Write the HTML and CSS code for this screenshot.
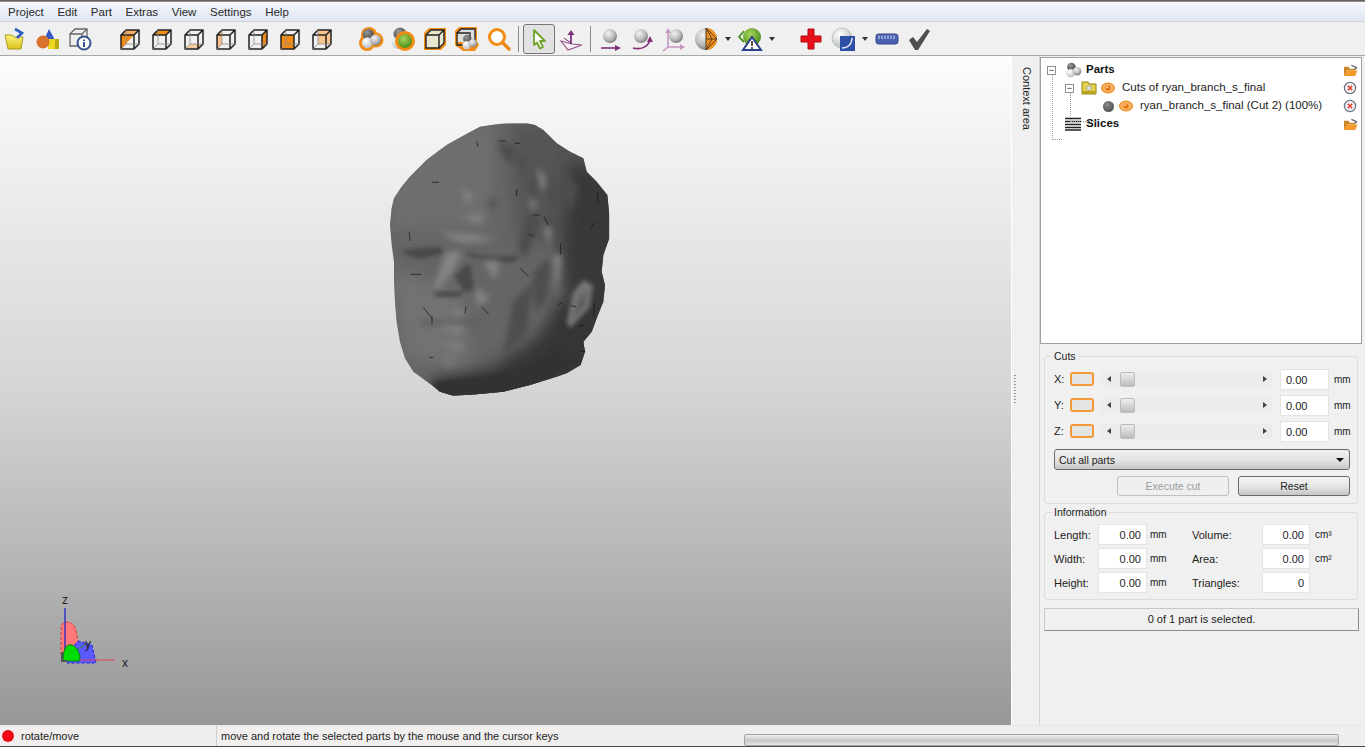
FILE: index.html
```html
<!DOCTYPE html>
<html lang="en">
<head>
<meta charset="utf-8">
<title>Project</title>
<link rel="stylesheet" href="styles.css">
</head>
<body>
<svg class="defs" width="0" height="0" aria-hidden="true">
  <defs>
    <radialGradient id="gGrey" cx="38%" cy="32%" r="70%"><stop offset="0" stop-color="#f2f2f2"/><stop offset=".6" stop-color="#bdbdbd"/><stop offset="1" stop-color="#7d7d7d"/></radialGradient>
    <radialGradient id="gDark" cx="38%" cy="32%" r="70%"><stop offset="0" stop-color="#9a9a9a"/><stop offset="1" stop-color="#404040"/></radialGradient>
    <radialGradient id="gLight" cx="38%" cy="32%" r="70%"><stop offset="0" stop-color="#fff"/><stop offset="1" stop-color="#b9bec0"/></radialGradient>
    <radialGradient id="gGreen" cx="40%" cy="35%" r="65%"><stop offset="0" stop-color="#a9d65d"/><stop offset="1" stop-color="#4e8f1c"/></radialGradient>
    <linearGradient id="gFolder" x1="0" y1="0" x2="0" y2="1"><stop offset="0" stop-color="#fff27a"/><stop offset="1" stop-color="#d9c21a"/></linearGradient>
    <symbol id="cubeFrame" viewBox="0 0 24 24">
      <path d="M3 8 8 3H21V17L16 22H3Z M3 8H16V22 M16 8 21 3" fill="none" stroke="#222" stroke-width="1.5" stroke-linejoin="round"/>
      <path d="M8 3V17H21 M8 17 3 22" fill="none" stroke="#8a8a8a" stroke-width=".8"/>
    </symbol>
    <symbol id="molecules" viewBox="0 0 24 24">
      <circle cx="9" cy="7" r="6" fill="url(#gDark)"/><circle cx="8" cy="16" r="6" fill="url(#gLight)"/><circle cx="17" cy="13" r="6" fill="url(#gGrey)"/>
    </symbol>
    <symbol id="openFolder" viewBox="0 0 16 14">
      <path d="M1 3H6L7 5H13V7H4L1 13Z" fill="#c8852a"/><path d="M3.5 7H15.5L13 13H1Z" fill="#f49a2a"/><path d="M9 1.5 14.5 4 12.5 6" fill="none" stroke="#666" stroke-width="1.4"/>
    </symbol>
    <symbol id="eye" viewBox="0 0 14 12">
      <ellipse cx="7" cy="6" rx="6.4" ry="4.8" fill="#f6b26b" stroke="#ee8a18" stroke-width="1.2"/><circle cx="7" cy="6" r="2.6" fill="#e9780c"/><circle cx="6.2" cy="5.2" r=".9" fill="#ffe3c2"/>
    </symbol>
    <symbol id="remove" viewBox="0 0 14 14">
      <circle cx="7" cy="7" r="5.6" fill="#f4f4f6" stroke="#6f7688" stroke-width="1.3"/><path d="M4.8 4.8 9.2 9.2M9.2 4.8 4.8 9.2" stroke="#e2402a" stroke-width="1.6"/>
    </symbol>
  </defs>
</svg>

<div class="app">
  <div class="titleline"></div>
  <nav class="menubar">
    <span>Project</span><span>Edit</span><span>Part</span><span>Extras</span><span>View</span><span>Settings</span><span>Help</span>
  </nav>

  <div class="toolbar">
    <div class="tgroup">
      <span class="tool"><svg viewBox="0 0 24 24"><path d="M1 8H8L10 10H19L17 22 4 22Z" fill="url(#gFolder)" stroke="#a89a20"/><path d="M11 2 18 6 13 11" fill="none" stroke="#2a5fc0" stroke-width="2.6"/></svg></span>
      <span class="tool"><svg viewBox="0 0 24 24"><path d="M13 2 19 13H8Z" fill="#3557c6"/><rect x="12" y="12" width="11" height="10" fill="#ecd81f"/><path d="M19 12h4v10h-4z" fill="#b9a80f"/><circle cx="7" cy="15" r="6.500" fill="#d8722c"/></svg></span>
      <span class="tool"><svg viewBox="0 0 24 24"><path d="M2 7 7 2H19V15L14 19H2Z M2 7H14V19 M14 7 19 2" fill="none" stroke="#666" stroke-width="1.300"/><circle cx="16" cy="16" r="6.500" fill="#fff" stroke="#3a5290" stroke-width="2"/><path d="M16 12.500v1.500M16 15v5" stroke="#3a5290" stroke-width="2"/></svg></span>
    </div>
    <div class="tgroup tgroup-cubes">
      <span class="tool"><svg viewBox="0 0 24 24"><path d="M3 8H16L3 22Z" fill="#f28c14"/><path d="M3 8 8 3H21L16 8Z" fill="#f5ad67"/><use href="#cubeFrame"/></svg></span>
      <span class="tool"><svg viewBox="0 0 24 24"><path d="M3 8 8 3H21L16 8Z" fill="#f28c14"/><use href="#cubeFrame"/></svg></span>
      <span class="tool"><svg viewBox="0 0 24 24"><path d="M3 22 8 17H21L16 22Z" fill="#f5c9a0"/><use href="#cubeFrame"/></svg></span>
      <span class="tool"><svg viewBox="0 0 24 24"><path d="M3 8 8 3V17L3 22Z" fill="#f5c08a"/><use href="#cubeFrame"/></svg></span>
      <span class="tool"><svg viewBox="0 0 24 24"><path d="M16 8 21 3V17L16 22Z" fill="#e88a1c"/><use href="#cubeFrame"/></svg></span>
      <span class="tool"><svg viewBox="0 0 24 24"><rect x="3" y="8" width="13" height="14" fill="#f28c14"/><use href="#cubeFrame"/></svg></span>
      <span class="tool"><svg viewBox="0 0 24 24"><rect x="8" y="3" width="13" height="14" fill="#f8c58e"/><use href="#cubeFrame"/></svg></span>
    </div>
    <div class="tgroup tgroup-select">
      <span class="tool"><svg viewBox="0 0 24 24"><g fill="#f28c14"><circle cx="10" cy="8" r="8"/><circle cx="8" cy="16" r="8"/><circle cx="17" cy="13" r="7.500"/></g><g transform="translate(1 1) scale(.92)"><use href="#molecules" width="24" height="24"/></g></svg></span>
      <span class="tool"><svg viewBox="0 0 24 24"><circle cx="9" cy="7" r="6.500" fill="url(#gDark)"/><circle cx="7" cy="16" r="6" fill="url(#gLight)"/><circle cx="14" cy="14" r="10" fill="#f28c14"/><circle cx="14" cy="14" r="7" fill="url(#gGreen)"/></svg></span>
      <span class="tool"><svg viewBox="0 0 24 24"><path d="M1 6 6 1H23V18L18 23H1Z" fill="#f28c14"/><path d="M3 8 8 3H21V16L16 21H3Z" fill="#e7e8cf"/><path d="M3 8H16V21M16 8 21 3M3 8 8 3H21V16L16 21H3Z" fill="none" stroke="#222" stroke-width="1.400"/></svg></span>
      <span class="tool"><svg viewBox="0 0 24 24"><path d="M0 4 4 0H22V14L24 18 20 24H8L0 18Z" fill="#f28c14"/><path d="M2 6 6 2H20V15H2Z" fill="#ddd"/><path d="M2 6H15V18H2Z M2 6 6 2H20V15L15 18" fill="none" stroke="#222" stroke-width="1.300"/><g transform="translate(6 7) scale(.7)"><use href="#molecules" width="24" height="24"/></g></svg></span>
      <span class="tool"><svg viewBox="0 0 24 24"><circle cx="10" cy="10" r="7.500" fill="#fff" stroke="#f28c14" stroke-width="3"/><path d="M16 16 22 22" stroke="#ee8a18" stroke-width="3.400" stroke-linecap="round"/></svg></span>
    </div>
    <span class="tsep"></span>
    <span class="tool tool-active"><svg viewBox="0 0 24 24"><path d="M7 3 18 14H13L16 20 13 21.500 10 15.500 7 18Z" fill="#fff" stroke="#6fa52a" stroke-width="1.800" stroke-linejoin="round"/></svg></span>
    <span class="tool"><svg viewBox="0 0 24 24"><path d="M2 14 13 17 23 18 9 23Z" fill="#f6f0f6" stroke="#94518c" stroke-width="1.100"/><path d="M12 17V5" stroke="#7e2f78" stroke-width="1.800"/><path d="M12 3 15.500 8H8.500Z" fill="#7e2f78"/><path d="M12 16 5 11" stroke="#7e2f78" stroke-width="1"/></svg></span>
    <span class="tsep"></span>
    <div class="tgroup tgroup-move">
      <span class="tool"><svg viewBox="0 0 24 24"><circle cx="12" cy="9" r="7" fill="url(#gGrey)"/><path d="M3 21H19" stroke="#7e2f78" stroke-width="1.600"/><path d="M23 21 17 18V24Z" fill="#7e2f78"/></svg></span>
      <span class="tool"><svg viewBox="0 0 24 24"><circle cx="11" cy="9" r="7" fill="url(#gGrey)"/><path d="M3 21C11 23 18 20 20 13" fill="none" stroke="#7e2f78" stroke-width="1.600"/><path d="M20 9 23 15H17Z" fill="#7e2f78"/></svg></span>
      <span class="tool"><svg viewBox="0 0 24 24"><circle cx="14" cy="9" r="7" fill="url(#gGrey)"/><path d="M6 4V20H20M6 20 1 24" fill="none" stroke="#c597c1" stroke-width="1.600"/><path d="M6 1 9 6H3Z M23 20 18 17V23Z" fill="#c597c1"/></svg></span>
    </div>
    <span class="tool"><svg viewBox="0 0 24 24"><circle cx="12" cy="12" r="11" fill="url(#gGrey)"/><path d="M12 1A11 11 0 0 1 12 23Z" fill="#ef931f"/><path d="M12 1 23 12 12 23M12 12H23M12 1 18 12 12 23" fill="none" stroke="#4a3420" stroke-width=".9"/><path d="M12 1V23" stroke="#4a3420"/></svg></span>
    <span class="drop"></span>
    <span class="tool"><svg viewBox="0 0 24 24"><circle cx="14" cy="10" r="9" fill="url(#gGreen)"/><path d="M6 4 1 10 6 15" fill="none" stroke="#4f8f20" stroke-width="1.800"/><path d="M14 10 23 23H5Z" fill="#fff" stroke="#2d3f8a" stroke-width="2"/><path d="M14 14V19M14 20V22" stroke="#222" stroke-width="1.500"/></svg></span>
    <span class="drop"></span>
    <span class="tool tool-cross"><svg viewBox="0 0 24 24"><path d="M9 2H15V9H22V15H15V22H9V15H2V9H9Z" fill="#e8101a" stroke="#b40d12" stroke-linejoin="round"/></svg></span>
    <span class="tool"><svg viewBox="0 0 24 24"><circle cx="11" cy="11" r="10" fill="url(#gLight)" stroke="#aaa" stroke-width=".6"/><rect x="9" y="9" width="15" height="15" fill="#2e4fa6"/><path d="M11 21C17 21 21 17 21 11" fill="none" stroke="#dfe6f8" stroke-width="1.500"/></svg></span>
    <span class="drop"></span>
    <span class="tool tool-ruler"><svg viewBox="0 0 24 24"><rect x="1" y="7" width="22" height="10" rx="2.500" fill="#4a62b0" stroke="#37478a"/><path d="M4 8.500V12M7 8.500V12M10 8.500V12M13 8.500V12M16 8.500V12M19 8.500V12" stroke="#d8e0f4"/></svg></span>
    <span class="tool"><svg viewBox="0 0 24 24"><path d="M2 13 6 10 10 15 20 2 23 4 11 23H8Z" fill="#4e4e4e"/></svg></span>
  </div>

  <main class="workspace">
    <section class="viewport">
      <svg class="face" viewBox="0 0 750 870" aria-label="3D head model">
        <defs>
          <filter id="soft" x="-30%" y="-30%" width="160%" height="160%"><feGaussianBlur stdDeviation="6"/></filter>
          <filter id="fine" x="-30%" y="-30%" width="160%" height="160%"><feGaussianBlur stdDeviation="9"/></filter>
          <filter id="soft2" x="-30%" y="-30%" width="160%" height="160%"><feGaussianBlur stdDeviation="24"/></filter>
          <clipPath id="faceClip"><path d="M330 35 380 28 410 25 470 25 495 30 520 45 545 70 560 85 600 110 640 130 650 170 680 200 712 240 718 300 718 370 700 420 695 470 705 510 700 560 680 610 665 650 640 680 645 710 632 750 590 775 560 785 480 810 400 830 320 838 250 842 210 830 185 810 130 770 105 730 90 680 80 620 75 560 72 490 72 440 65 390 60 330 65 280 72 250 95 215 120 185 170 135 230 90 280 62Z"/></clipPath>
        </defs>
        <g clip-path="url(#faceClip)">
          <rect width="750" height="870" fill="#656565"/>
          <path d="M60 30H380L360 340 60 340Z" fill="#6e6e6e" filter="url(#soft2)"/>
          <path d="M60 460 280 540 300 780 100 720Z" fill="#727272" filter="url(#soft2)"/>
          <path d="M420 20H640L700 300 560 400 440 360Z" fill="#555" filter="url(#soft2)"/>
          <path d="M600 130 780 220V680L660 720 600 640 570 420Z" fill="#393939" filter="url(#soft2)"/>
          <path d="M140 900 190 790 360 760 500 670 580 540 720 660 660 800 400 900Z" fill="#343434" filter="url(#soft2)"/>
          <path d="M190 800 400 775 560 715 640 735 400 860 210 860Z" fill="#333" filter="url(#soft)"/>
          <g filter="url(#fine)" fill="#4e4e4e">
            <path d="M440 400 490 262 505 330 470 430Z"/><path d="M355 260 380 245 370 300Z"/>
            <path d="M490 170 520 195 505 250 480 240Z"/><path d="M530 165 575 235 550 290 530 240Z"/>
            <path d="M575 160 625 220 600 300 580 240Z"/><path d="M380 75 440 100 430 155 395 120Z"/>
            <path d="M440 130 470 110 460 190Z"/><path d="M490 470 545 425 530 560 495 590Z"/>
            <path d="M430 560 490 500 470 660 400 720Z"/><path d="M535 300 580 330 560 400 530 380Z"/>
            <path d="M150 618H330V630H150Z" fill="#5a5a5a"/>
          </g>
          <g filter="url(#soft)" fill="#484848">
            <path d="M95 405 150 400 210 395 225 415 150 432 110 420Z"/><path d="M285 412 360 425 455 422 425 444 340 432 300 425Z"/>
            <path d="M190 528 280 530 270 545 200 545Z"/><path d="M252 480 300 445 312 525 282 530Z"/>
          </g>
          <g filter="url(#fine)" fill="#858585">
            <path d="M275 220 310 240 290 270Z"/><path d="M275 305 345 296 330 325Z"/>
            <path d="M205 355 320 360 380 375 280 385Z"/><path d="M340 440 390 440 375 495Z"/>
            <path d="M320 515 360 550 320 575Z"/><path d="M250 578 290 590 260 604Z"/>
            <path d="M195 632 285 635 270 655ZM210 685 285 685 270 702Z"/><path d="M222 732 258 745 230 752Z"/>
            <path d="M550 420 575 420 560 545Z"/><path d="M478 248 502 265 485 295Z"/>
            <path d="M228 412 278 410 248 470 205 522 190 522Z"/>
            <path d="M500 160 530 190 515 240Z"/><path d="M520 330 545 340 540 410Z"/>
          </g>
          <g filter="url(#soft)">
            <path d="M610 530 640 495 668 510 660 575 600 640 590 620Z" fill="#757575"/>
            <path d="M620 560 645 525 650 570 610 610Z" fill="#5f5f5f"/>
          </g>
        </g>
        <path d="M320 78 324 96M388 78H406M434 85H450M186 202H207M440 222V243M490 300H510M522 304 534 330M476 358 492 364M118 350 120 378M572 384V418M122 478H154M450 460 476 484M186 610 160 578M186 604V628M336 576 356 598M288 575 285 596M178 727H190M682 235 684 262M660 340 676 322M562 572 576 562M600 572 618 575M672 560V606M628 632 642 630M632 708 646 710" stroke="#111" stroke-width="2" fill="none"/>
      </svg>

      <svg class="axes" viewBox="0 0 100 85" aria-label="Axes">
        <path d="M21 65V37C21 30 34 30 36 40L40 62Z" fill="#ff7878" stroke="#d83838" stroke-dasharray="3 2"/>
        <path d="M28 63 38 51 52 55 56 73H27Z" fill="#5a5aff" stroke="#2222dd" stroke-dasharray="3 2"/>
        <path d="M25 18V68" stroke="#2222cc" stroke-width="1.300"/>
        <path d="M25 70H75" stroke="#e0405a" stroke-width="1"/>
        <path d="M23 70C23 55 30 52 35 57 40 62 41 68 39 71L27 71Z" fill="#00dd00" stroke="#0a7a0a"/>
        <path d="M36 60 46 54" stroke="#2a8a2a"/>
        <path d="M22 62V71H27" fill="none" stroke="#555" stroke-width="2"/>
        <text class="axis-label" x="22" y="14">z</text>
        <text class="axis-label" x="45" y="58">y</text>
        <text class="axis-label" x="82" y="77">x</text>
      </svg>
    </section>

    <div class="splitter"><span class="grip"></span></div>

    <aside class="dock-tab"><span>Context area</span></aside>

    <div class="panel">
      <div class="tree">
        <div class="tree-row tree-l0">
          <span class="expander">−</span>
          <svg class="tree-icon"><use href="#molecules"/></svg>
          <b>Parts</b>
          <svg class="row-action"><use href="#openFolder"/></svg>
        </div>
        <div class="tree-row tree-l1">
          <span class="expander">−</span>
          <svg class="tree-icon tree-icon-folder" viewBox="0 0 16 14"><path d="M1 1H7L8 3H15V13H1Z" fill="#e6d24a" stroke="#8d7f14"/><circle cx="8" cy="7" r="2.500" fill="#ddd" stroke="#888" stroke-width=".5"/><path d="M2 10H14V13H2Z" fill="#b9a21a"/></svg>
          <svg class="eye"><use href="#eye"/></svg>
          <span class="tree-text">Cuts of ryan_branch_s_final</span>
          <svg class="row-action row-remove"><use href="#remove"/></svg>
        </div>
        <div class="tree-row tree-l2">
          <span class="ball"></span>
          <svg class="eye"><use href="#eye"/></svg>
          <span class="tree-text">ryan_branch_s_final (Cut 2) (100%)</span>
          <svg class="row-action row-remove"><use href="#remove"/></svg>
        </div>
        <div class="tree-row tree-slices">
          <svg class="tree-icon-lines" viewBox="0 0 18 14"><path d="M1 1.500H17M1 4.500H17M1 7.500H17M1 10.500H17M1 13H17" stroke="#222" stroke-width="1.500"/></svg>
          <b>Slices</b>
          <svg class="row-action"><use href="#openFolder"/></svg>
        </div>
        <span class="tree-line tree-line-root"></span>
        <span class="tree-line tree-line-child"></span>
      </div>

      <fieldset class="group group-cuts">
        <legend>Cuts</legend>
        <div class="cut-row">
          <span class="axis">X:</span><span class="swatch"></span>
          <div class="slider"><i class="arrow-l"></i><i class="thumb"></i><i class="arrow-r"></i></div>
          <span class="field">0.00</span><span class="unit">mm</span>
        </div>
        <div class="cut-row">
          <span class="axis">Y:</span><span class="swatch"></span>
          <div class="slider"><i class="arrow-l"></i><i class="thumb"></i><i class="arrow-r"></i></div>
          <span class="field">0.00</span><span class="unit">mm</span>
        </div>
        <div class="cut-row">
          <span class="axis">Z:</span><span class="swatch"></span>
          <div class="slider"><i class="arrow-l"></i><i class="thumb"></i><i class="arrow-r"></i></div>
          <span class="field">0.00</span><span class="unit">mm</span>
        </div>
        <div class="combo"><span>Cut all parts</span><i class="combo-arrow"></i></div>
        <div class="btn-row">
          <span class="btn btn-disabled">Execute cut</span>
          <span class="btn">Reset</span>
        </div>
      </fieldset>

      <fieldset class="group group-info">
        <legend>Information</legend>
        <div class="info-grid">
          <span>Length:</span><span class="field">0.00</span><span class="unit unit-mm">mm</span>
          <span>Volume:</span><span class="field">0.00</span><span class="unit">cm³</span>
          <span>Width:</span><span class="field">0.00</span><span class="unit unit-mm">mm</span>
          <span>Area:</span><span class="field">0.00</span><span class="unit">cm²</span>
          <span>Height:</span><span class="field">0.00</span><span class="unit unit-mm">mm</span>
          <span>Triangles:</span><span class="field">0</span><span></span>
        </div>
      </fieldset>

      <div class="selection">0 of 1 part is selected.</div>
    </div>
  </main>

  <footer class="statusbar">
    <div class="status-mode"><span class="status-dot"></span><span>rotate/move</span></div>
    <div class="status-msg">move and rotate the selected parts by the mouse and the cursor keys</div>
    <div class="status-progress"><div class="progress"></div></div>
  </footer>
</div>
</body>
</html>
```
FILE: styles.css
```css
* { box-sizing: border-box; }
html, body { margin: 0; height: 100%; overflow: hidden; }
body { font: 11px "Liberation Sans", Arial, sans-serif; color: #222; background: #f0f0f0; }
.defs { position: absolute; }

.app { width: 1365px; height: 747px; display: flex; flex-direction: column; }
.titleline { height: 2px; background: linear-gradient(#55504c, #a09c98); flex: none; }

.menubar {
  height: 19px; flex: none; display: flex; align-items: center; gap: 13.600px; padding: 0 0 0 8px;
  background: linear-gradient(#f4f7fc, #dfe5f2);
  font-size: 11.500px; color: #2a2a2a;
}

.toolbar {
  height: 35px; flex: none; display: flex; align-items: center;
  background: #f0f0f0; border-top: 1px solid #d0d2d6; border-bottom: 1px solid #a8a8a8;
}
.tgroup { display: flex; flex: none; }
.tgroup-cubes { margin-left: 18px; }
.tgroup-select { margin-left: 17px; }
.tool { width: 32px; height: 32px; flex: none; display: flex; align-items: center; justify-content: center; }
.tool svg { width: 24px; height: 24px; display: block; overflow: visible; }
.tool-active { width: 32px; height: 30px; margin: 0 0 0 2px; border: 1px solid #777; border-radius: 3px; background: #e2e2e2; }
.tsep { width: 1px; height: 26px; flex: none; margin: 0 2px 0 3px; background: #8e8e8e; }
.tgroup-move { margin-left: 1px; }
.drop { width: 0; height: 0; flex: none; margin: 0 3px; border: 3.500px solid transparent; border-top: 4px solid #333; border-bottom: 0; }
.tool-cross { margin-left: 17px; }
.tool-ruler { margin-left: 0; }

.workspace { flex: 1; min-height: 0; display: flex; }
.viewport {
  position: relative; width: 1011px; flex: none;
  background: linear-gradient(#fcfcfc 0, #d5d5d5 50%, #979797 100%);
  overflow: hidden;
}
.face { position: absolute; left: 370px; top: 59px; width: 250px; height: 290px; }
.axes { position: absolute; left: 40px; top: 534px; width: 100px; height: 85px; }
.axis-label { font: 12px "Liberation Sans", Arial, sans-serif; fill: #222; }

.splitter { width: 6px; flex: none; display: flex; align-items: center; justify-content: center; background: #f0f0f0; border-left: 1px solid #fff; }
.grip { width: 2px; height: 30px; margin-bottom: 2px; background: repeating-linear-gradient(#9a9a9a 0 1px, transparent 1px 3px); }

.dock-tab { width: 23px; flex: none; padding-top: 11px; background: #f0f0f0; border-right: 1px solid #d4d4d4; }
.dock-tab span { display: block; writing-mode: vertical-rl; font-size: 11px; margin-left: 4px; color: #222; }

.panel { flex: 1; display: flex; flex-direction: column; padding: 1px 3px 0 0; background: #f0f0f0; min-width: 0; }
.tree { position: relative; height: 287px; flex: none; background: #fff; border: 1px solid #a0a0a0; padding-top: 3px; margin-bottom: 6px; }
.tree-row { height: 18px; display: flex; align-items: center; position: relative; font-size: 11.500px; color: #222; }
.tree-row b { font-size: 11.500px; color: #111; margin-bottom: 2px; }
.tree-text { margin-bottom: 2px; }
.tree-l0 { padding-left: 6px; }
.tree-l1 { padding-left: 24px; }
.tree-l2 { padding-left: 62px; }
.tree-slices { padding-left: 23px; }
.expander {
  width: 9px; height: 9px; flex: none; border: 1px solid #909090; background: #fff;
  font-size: 9px; line-height: 6px; text-align: center; color: #222; overflow: hidden;
}
.tree-icon { width: 17px; height: 17px; margin-left: 9px; margin-right: 4px; flex: none; }
.tree-icon-folder { width: 16px; height: 14px; margin-left: 7px; margin-right: 0; }
.eye { width: 14px; height: 12px; flex: none; margin: 0 7px 0 4px; }
.ball { width: 11px; height: 11px; flex: none; border-radius: 50%; background: radial-gradient(circle at 40% 35%, #8a8a8a, #3d3d3d); }
.tree-l2 .eye { margin-left: 5px; }
.tree-icon-lines { width: 18px; height: 14px; flex: none; margin-right: 4px; }
.row-action { position: absolute; right: 3px; top: 3px; width: 15px; height: 13px; }
.row-remove { width: 14px; height: 14px; top: 2px; right: 4px; }
.tree-line { position: absolute; border-left: 1px dotted #999; border-bottom: 1px dotted #999; }
.tree-line-root { left: 11px; top: 16px; width: 10px; height: 66px; }
.tree-line-child { left: 29px; top: 34px; width: 28px; height: 30px; }

.group { margin: 0 0 0 4px; padding: 0; min-width: 0; border: 1px solid #dcdcdc; border-radius: 3px; width: 314px; }
.group legend { margin-left: -2px; padding: 0 2px; font-size: 10.500px; line-height: 12px; color: #222; }
.group-cuts { height: 154px; padding: 4px 9px 0 9px; margin-bottom: 2px; }
.group-info { height: 94px; padding: 6px 9px 0 9px; }
.cut-row { height: 26px; display: flex; align-items: center; }
.axis { width: 16px; flex: none; }
.unit { font-size: 10px; }
.swatch { width: 24px; height: 14px; flex: none; border: 2px solid #f29a38; border-radius: 3px; background: #e4e4e4; }
.slider { width: 172px; height: 15px; flex: none; margin: 0 7px; position: relative; background: #ececec; }
.slider i { position: absolute; display: block; }
.arrow-l { left: 6px; top: 4px; width: 0; height: 0; border: 3.500px solid transparent; border-left: 0; border-right: 4px solid #444; }
.arrow-r { right: 6px; top: 4px; width: 0; height: 0; border: 3.500px solid transparent; border-right: 0; border-left: 4px solid #444; }
.thumb { left: 19px; top: 0; width: 15px; height: 15px; border: 1px solid #bbb; border-radius: 2px; background: linear-gradient(#eee, #d2d2d2 55%, #bcbcbc); }
.field { display: block; height: 21px; line-height: 20px; background: #fff; border: 1px solid #e3e3e3; padding: 0 5px; text-align: right; }
.cut-row .field { width: 49px; flex: none; margin-right: 5px; text-align: left; padding-left: 5px; }
.combo {
  height: 21px; margin-top: 5px; width: 296px; border: 1px solid #6a6a6a; border-radius: 3px;
  background: linear-gradient(#f0f0f0, #e4e4e4 50%, #c8c8c8); display: flex; align-items: center; justify-content: space-between; padding: 0 5px 0 4px; font-size: 10.500px;
}
.combo-arrow { width: 0; height: 0; border: 4px solid transparent; border-top: 4px solid #111; border-bottom: 0; }
.btn-row { display: flex; justify-content: flex-end; gap: 9px; margin-top: 6px; width: 296px; }
.btn { width: 112px; height: 20px; line-height: 18px; text-align: center; border: 1px solid #6a6a6a; border-radius: 3px; background: linear-gradient(#f4f4f4, #e6e6e6 50%, #c6c6c6); font-size: 10.500px; }
.btn-disabled { color: #9a9a9a; border-color: #c0c0c0; background: #efefef; }

.info-grid { display: grid; grid-template-columns: 44px 49px 45px 70px 48px 30px; grid-auto-rows: 21px; row-gap: 3px; align-items: center; }
.info-grid .unit { padding-left: 5px; }
.info-grid .unit-mm { padding-left: 3px; }

.selection {
  width: 315px; height: 23px; margin: 8px 0 0 4px; line-height: 21px; text-align: center;
  background: #f0f0f0; border: 1px solid #c8c8c8; border-right-color: #8c8c8c; border-bottom-color: #8c8c8c;
}

.statusbar { height: 22px; flex: none; display: flex; background: #f0efee; border-top: 1px solid #e8e8e8; border-bottom: 1px solid #4a4a4a; }
.status-mode { width: 217px; display: flex; align-items: center; gap: 7px; padding-left: 2px; border-right: 1px solid #cfcfcf; flex: none; }
.status-dot { width: 12px; height: 12px; border-radius: 50%; background: #ee0a14; flex: none; }
.status-msg { width: 527px; padding-left: 4px; flex: none; line-height: 21px; }
.status-progress { flex: 1; padding: 8px 26px 0 0; }
.progress { height: 12px; border: 1px solid #a4a4a4; border-radius: 2px; background: linear-gradient(#eee, #c8c8c8 55%, #e4e4e4); }
```
